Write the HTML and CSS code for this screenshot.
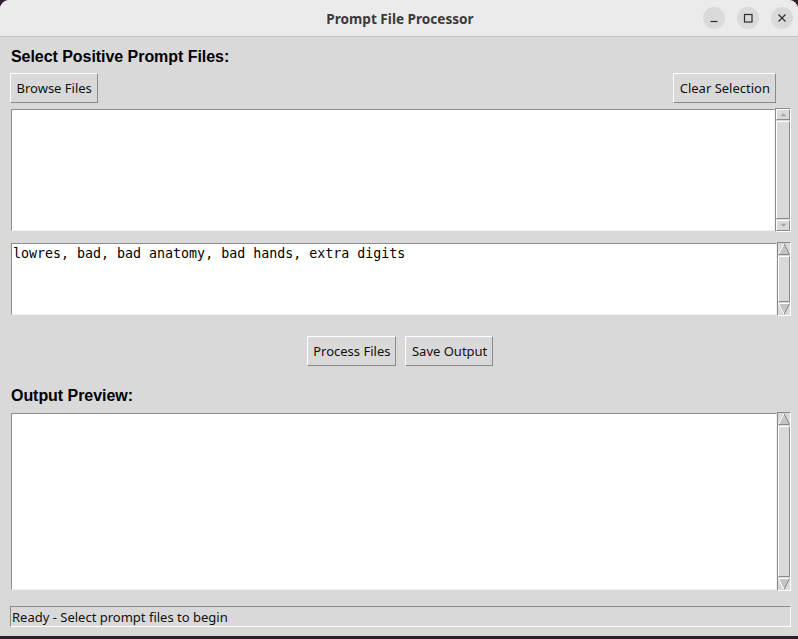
FILE: index.html
```html
<!DOCTYPE html>
<html lang="en">
<head>
<meta charset="utf-8">
<title>Prompt File Processor</title>
<link rel="stylesheet" href="styles.css">
</head>
<body>
<div class="window">
  <header class="titlebar">
    <span class="title">Prompt File Processor</span>
    <div class="controls">
      <span class="ctl"><svg width="10" height="10" viewBox="0 0 10 10"><path d="M1.5 8.5h7" stroke="#2e2e2e" stroke-width="1.2" fill="none"/></svg></span>
      <span class="ctl"><svg width="10" height="10" viewBox="0 0 10 10"><rect x="1.5" y="1.5" width="7.5" height="7.5" stroke="#2e2e2e" stroke-width="1.2" fill="none"/></svg></span>
      <span class="ctl"><svg width="10" height="10" viewBox="0 0 10 10"><path d="M1.5 1.5l7 7M8.5 1.5l-7 7" stroke="#2e2e2e" stroke-width="1.2" fill="none"/></svg></span>
    </div>
  </header>
  <main class="content">
    <h2 class="heading">Select Positive Prompt Files:</h2>
    <div class="toolbar">
      <button class="btn">Browse Files</button>
      <button class="btn">Clear Selection</button>
    </div>
    <div class="row row-list">
      <div class="field"></div>
      <div class="sb sb-wide">
        <div class="sb-btn"><svg width="14" height="9" viewBox="0 0 14 9"><path d="M4 6.5h7L7.5 3z" fill="#a5a5a5"/></svg></div>
        <div class="sb-slider"></div>
        <div class="sb-btn"><svg width="14" height="9" viewBox="0 0 14 9"><path d="M4 2.5h7L7.5 6z" fill="#a5a5a5"/></svg></div>
      </div>
    </div>
    <div class="row row-neg">
      <div class="field mono">lowres, bad, bad anatomy, bad hands, extra digits</div>
      <div class="sb sb-narrow">
        <div class="sb-arrow"><svg width="12" height="12" viewBox="0 0 12 12"><path d="M6 0.5L0.5 11.5H11.5z" fill="#c4c4c4"/><path d="M0.5 11.5L6 0.5" stroke="#ffffff" fill="none"/><path d="M6 0.5L11.5 11.5H0.5" stroke="#8a8a8a" fill="none"/></svg></div>
        <div class="sb-slider"></div>
        <div class="sb-arrow"><svg width="12" height="12" viewBox="0 0 12 12"><path d="M6 11.5L0.5 0.5H11.5z" fill="#c4c4c4"/><path d="M11.5 0.5H0.5L6 11.5" stroke="#ffffff" fill="none"/><path d="M6 11.5L11.5 0.5" stroke="#8a8a8a" fill="none"/></svg></div>
      </div>
    </div>
    <div class="actions">
      <button class="btn">Process Files</button>
      <button class="btn">Save Output</button>
    </div>
    <h2 class="heading heading-out">Output Preview:</h2>
    <div class="row row-out">
      <div class="field"></div>
      <div class="sb sb-narrow">
        <div class="sb-arrow"><svg width="12" height="12" viewBox="0 0 12 12"><path d="M6 0.5L0.5 11.5H11.5z" fill="#c4c4c4"/><path d="M0.5 11.5L6 0.5" stroke="#ffffff" fill="none"/><path d="M6 0.5L11.5 11.5H0.5" stroke="#8a8a8a" fill="none"/></svg></div>
        <div class="sb-slider"></div>
        <div class="sb-arrow"><svg width="12" height="12" viewBox="0 0 12 12"><path d="M6 11.5L0.5 0.5H11.5z" fill="#c4c4c4"/><path d="M11.5 0.5H0.5L6 11.5" stroke="#ffffff" fill="none"/><path d="M6 11.5L11.5 0.5" stroke="#8a8a8a" fill="none"/></svg></div>
      </div>
    </div>
    <div class="status">Ready - Select prompt files to begin</div>
  </main>
</div>
</body>
</html>
```
FILE: styles.css
```css
* { box-sizing: border-box; }
html, body { margin: 0; padding: 0; }
body {
  width: 798px;
  height: 639px;
  overflow: hidden;
  background: #2d1f2c;
  font-family: "Noto Sans", "DejaVu Sans", sans-serif;
}
.window {
  width: 798px;
  height: 636px;
  background: #d9d9d9;
  border-radius: 9px 9px 0 0;
  overflow: hidden;
  display: flex;
  flex-direction: column;
}
.titlebar {
  height: 37px;
  flex: none;
  background: #ebebeb;
  border-bottom: 1px solid #c4c4c4;
  position: relative;
  display: flex;
  align-items: center;
  justify-content: center;
}
.title {
  font-family: "Noto Sans", sans-serif;
  font-weight: 700;
  font-size: 13.6px;
  color: #3a3a3a;
  padding-left: 2px;
}
.controls {
  position: absolute;
  right: 5px;
  top: 7px;
  display: flex;
  gap: 12px;
}
.ctl {
  width: 22px;
  height: 22px;
  border-radius: 50%;
  background: #dadada;
  display: flex;
  align-items: center;
  justify-content: center;
}
.content {
  flex: 1;
  display: flex;
  flex-direction: column;
  padding: 10px 7px 9px 10px;
}
.heading {
  margin: 0;
  font-family: "Liberation Sans", Arial, sans-serif;
  font-weight: 700;
  font-size: 16px;
  line-height: 19px;
  color: #000;
  padding-left: 1px;
  letter-spacing: -0.05px;
}
.heading-out { margin-top: 20px; }
.toolbar {
  margin-top: 7px;
  display: flex;
  justify-content: space-between;
  padding-right: 15px;
}
.btn {
  height: 30px;
  padding: 0 5px 0 5.5px;
  background: #d9d9d9;
  border: 1px solid;
  border-color: #ffffff #8a8a8a #8a8a8a #ffffff;
  font-family: "Noto Sans", sans-serif;
  font-size: 13px;
  color: #111;
  margin: 0;
}
.row {
  display: flex;
  padding-left: 1px;
}
.row-list { margin-top: 5px; height: 124px; }
.row-neg { margin-top: 10px; height: 74px; }
.row-out { margin-top: 7px; height: 179px; }
.field {
  flex: 1;
  margin: 1px 0;
  background: #ffffff;
  border: 1px solid;
  border-color: #8c8c8c #f2f2f2 #f2f2f2 #8c8c8c;
  padding: 2px 1px;
}
.mono {
  font-family: "DejaVu Sans Mono", monospace;
  font-size: 13.3px;
  line-height: 15px;
  color: #000;
  white-space: pre;
}
.sb {
  flex: none;
  display: flex;
  flex-direction: column;
  border: 1px solid;
  border-color: #8b8b8b #ffffff #ffffff #8b8b8b;
  background: #d9d9d9;
}
.sb-wide { width: 16px; }
.sb-narrow { width: 14px; }
.sb-btn {
  height: 11px;
  flex: none;
  border: 1px solid;
  border-color: #ffffff #8b8b8b #8b8b8b #ffffff;
  display: flex;
  align-items: center;
  justify-content: center;
  overflow: hidden;
}
.sb-btn svg { display: block; }
.sb-arrow {
  height: 12px;
  flex: none;
  display: flex;
  justify-content: center;
}
.sb-arrow svg { display: block; }
.sb-slider {
  flex: 1;
  margin: 1px 0;
  border: 1px solid;
  border-color: #ffffff #8b8b8b #8b8b8b #ffffff;
}
.actions {
  margin-top: 20px;
  display: flex;
  justify-content: center;
  gap: 9px;
  padding-right: 1px;
}
.status {
  margin-top: 15px;
  height: 21px;
  border: 1px solid;
  border-color: #8b8b8b #ffffff #ffffff #8b8b8b;
  font-family: "Noto Sans", sans-serif;
  font-size: 13px;
  line-height: 19px;
  padding: 1px 0 0 1px;
  color: #111;
}
```
